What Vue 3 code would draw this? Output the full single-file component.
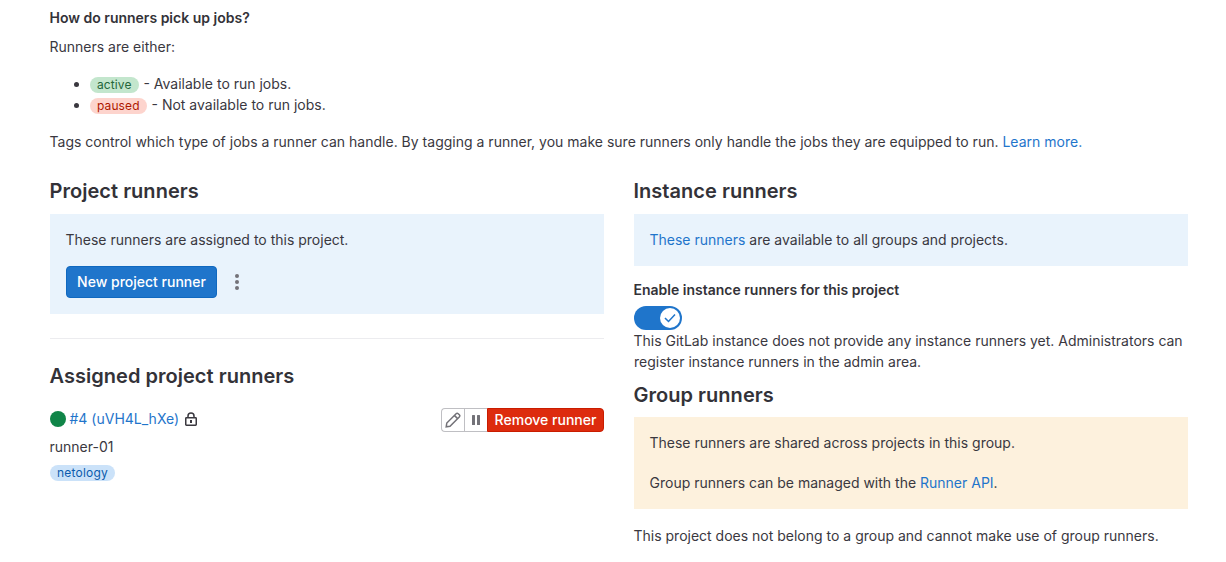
<script setup>
</script>

<template>
  <main class="page">
    <p class="strong intro-title">How do runners pick up jobs?</p>
    <p class="either">Runners are either:</p>
    <ul class="states">
      <li><span class="badge success">active</span> - Available to run jobs.</li>
      <li><span class="badge danger">paused</span> - Not available to run jobs.</li>
    </ul>
    <p class="tags-note">Tags control which type of jobs a runner can handle. By tagging a runner, you make sure runners only handle the jobs they are equipped to run. <a>Learn more.</a></p>

    <div class="columns">
      <section>
        <h4>Project runners</h4>
        <div class="callout info">
          <p>These runners are assigned to this project.</p>
          <div class="actions">
            <button class="btn-confirm">New project runner</button>
            <svg class="dots" width="16" height="16" viewBox="0 0 16 16" fill="currentColor"><circle cx="8" cy="2" r="2" /><circle cx="8" cy="8" r="2" /><circle cx="8" cy="14" r="2" /></svg>
          </div>
        </div>
        <hr />
        <h4>Assigned project runners</h4>
        <div class="runner">
          <div class="runner-name">
            <span class="status"></span>
            <a>#4 (uVH4L_hXe)</a>
            <svg class="lock" width="14" height="16" viewBox="0 0 14 16" fill="none" stroke="currentColor" stroke-width="1.5"><rect x="1.75" y="6.75" width="10.5" height="7.5" rx=".7" /><path d="M4 6.5V5a3 3 0 0 1 6 0v1.5" /><rect x="6" y="9" width="2" height="3" fill="currentColor" stroke="none" /></svg>
          </div>
          <div class="group">
            <button class="icon-btn"><svg width="16" height="16" viewBox="0 0 16 16" fill="none" stroke="currentColor" stroke-width="1.5"><path d="M1.2 14.8l.6-3.8 9.3-9.3a1.5 1.5 0 0 1 2.1 0l1.1 1.1a1.5 1.5 0 0 1 0 2.1L5 14.2zM9.4 3.4l3.2 3.2" /></svg></button>
            <button class="icon-btn"><svg width="16" height="16" viewBox="0 0 16 16" fill="currentColor"><rect x="4" y="3" width="3" height="10" rx=".5" /><rect x="9" y="3" width="3" height="10" rx=".5" /></svg></button>
            <button class="remove">Remove runner</button>
          </div>
        </div>
        <p class="description">runner-01</p>
        <div class="tag-row"><span class="badge tag">netology</span></div>
      </section>

      <section>
        <h4>Instance runners</h4>
        <div class="callout info"><p><a>These runners</a> are available to all groups and projects.</p></div>
        <p class="strong toggle-label">Enable instance runners for this project</p>
        <div class="toggle"><svg width="20" height="20" viewBox="0 0 20 20"><circle cx="10" cy="10" r="10" fill="#fff" /><path d="M5.5 10.5l3 3 6-6.5" fill="none" stroke="#1f75cb" stroke-width="1.5" stroke-linecap="square" /></svg></div>
        <p class="admin-note">This GitLab instance does not provide any instance runners yet. Administrators can register instance runners in the admin area.</p>
        <h4 class="group-title">Group runners</h4>
        <div class="callout warning">
          <p>These runners are shared across projects in this group.</p>
          <p>Group runners can be managed with the <a>Runner API</a>.</p>
        </div>
        <p class="group-note">This project does not belong to a group and cannot make use of group runners.</p>
      </section>
    </div>
  </main>
</template>

<style>
body { background: #fff; }
</style>

<style scoped>
.page { box-sizing: border-box; height: 562px; overflow: hidden; padding: 8px 38px 0 50px; color: #3a383f; font: 14px/20px Inter, "Noto Sans", sans-serif; }
p, h4, ul { margin: 0; }
p, h4 { text-indent: -0.5px; }
h4, .strong { color: #333238; }
a { color: #1f75cb; }
.strong { font-weight: 600; }
.either { margin-top: 9px; }
.states { margin-top: 16px; padding-left: 40px; line-height: 21px; }
.badge { display: inline-block; padding: 0 7px; border-radius: 10px; font-size: 12px; line-height: 16px; letter-spacing: .1px; }
.success { color: #24663b; background: #c3e6cd; margin-right: 1px; }
.danger { color: #ae1800; background: #fdd4cd; margin-right: 1px; }
.tag { color: #0b5cad; background: #cbe2f9; letter-spacing: .2px; }
.tags-note { margin-top: 17px; white-space: nowrap; letter-spacing: .008px; }
.columns { display: grid; grid-template-columns: 554px 554px; column-gap: 30px; margin-top: 27px; }
h4 { font-size: 20px; line-height: 24px; font-weight: 600; letter-spacing: .03px; }
.callout { padding: 16px; margin-top: 11px; }
.info { background: #e9f3fc; }
.warning { background: #fdf1dd; }
button { margin: 0; font: 500 14px/16px Inter, sans-serif; box-sizing: border-box; }
.actions { display: flex; align-items: center; gap: 12px; margin-top: 16px; }
.btn-confirm { width: 151px; height: 32px; padding: 0; border: 1px solid #1068bf; border-radius: 4px; color: #fff; background: #1f75cb; }
.dots { color: #737278; }
hr { border: 0; height: 1px; background: #ececef; margin: 24px 0 25px; }
.runner { display: flex; justify-content: space-between; height: 24px; margin-top: 20px; }
.runner-name { display: flex; align-items: center; height: 22px; }
.status { width: 16px; height: 16px; border-radius: 50%; background: #108548; margin-right: 3.5px; }
.lock { margin-left: 5px; }
.group { display: flex; }
.icon-btn { width: 23px; height: 24px; display: grid; place-items: center; padding: 0; color: #737278; background: #fff; border: 1px solid #bfbfc3; border-right: 0; }
.icon-btn:first-child { border-radius: 4px 0 0 4px; }
.remove { width: 117px; padding: 0; border: 1px solid #c91c00; color: #fff; background: #dd2b0e; border-radius: 0 4px 4px 0; }
.description { margin-top: 5px; }
.tag-row { margin-top: 5px; }
.toggle-label { margin-top: 14px; }
.toggle { display: flex; justify-content: flex-end; box-sizing: border-box; width: 48px; height: 24px; padding: 2px; margin-top: 6px; border-radius: 12px; background: #1f75cb; }
.admin-note { line-height: 21px; }
.group-title { margin-top: 11px; }
.group-title + .callout { margin-top: 10px; }
.warning p + p { margin-top: 20px; }
.group-note { margin-top: 17px; }
</style>
